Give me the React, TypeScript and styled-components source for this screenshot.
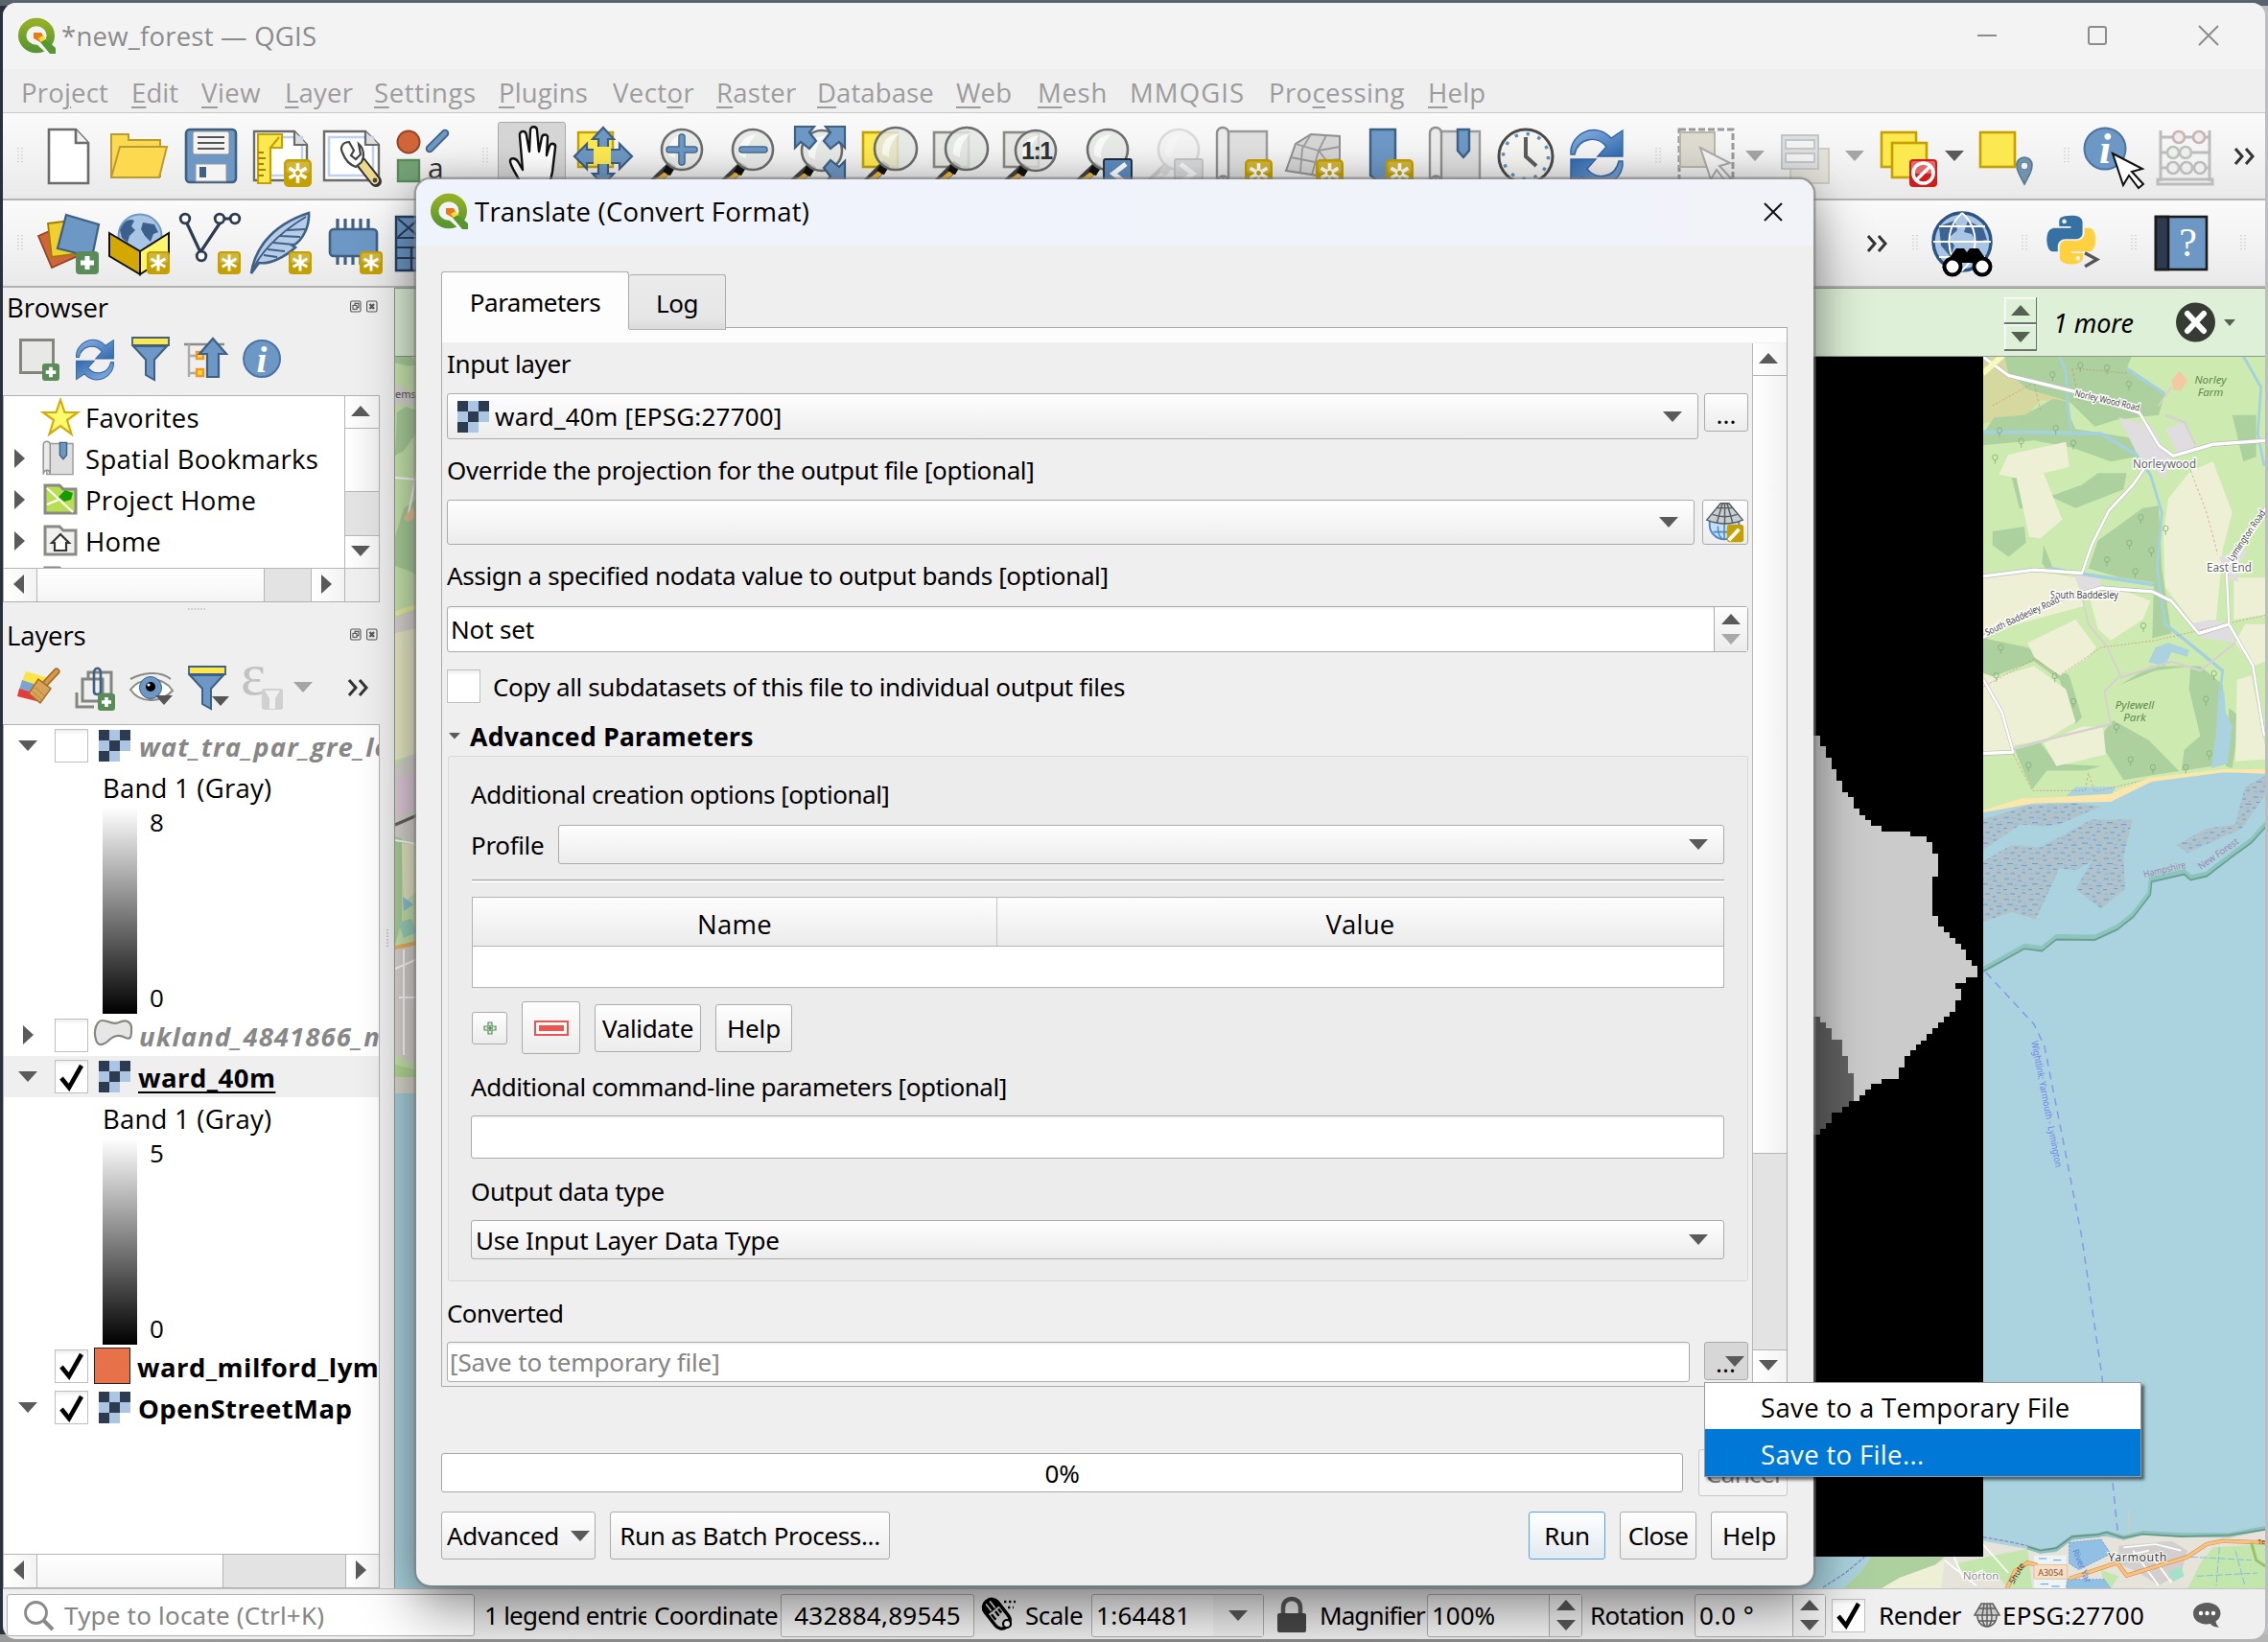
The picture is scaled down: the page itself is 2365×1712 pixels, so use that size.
import React from 'react';
import styled, { createGlobalStyle, css } from 'styled-components';

const SEGOE = `"Open Sans", "Noto Sans", sans-serif`;
const TAHOMA = `"Noto Sans", "Open Sans", sans-serif`;
const BLUE = '#6d97c4';
const NAVY = '#3f5f83';
const GOLD = '#c4a000';
const YELLOW = '#fce94f';

const Global = createGlobalStyle`
  *, *::before, *::after { box-sizing: border-box; }
  html, body { margin: 0; padding: 0; overflow: hidden; }
  svg { display: block; flex: none; overflow: visible; }
`;

/* ---------- shared text styles ---------- */
const segoe = css`
  font-family: ${SEGOE};
  font-size: 27.5px;
  letter-spacing: 0.23px;
  white-space: pre;
`;
const tahoma = css`
  font-family: ${TAHOMA};
  font-size: 26px;
  letter-spacing: -0.35px;
  white-space: pre;
`;
const face = css`
  background: linear-gradient(#fefefe, #ececec);
  border: 1.5px solid #ababab;
  border-radius: 3px;
`;

/* ---------- shell ---------- */
const Desktop = styled.div`
  position: relative;
  width: 2365px;
  height: 1712px;
  padding: 3px 3px 3px;
  overflow: hidden;
  color: #000;
  background:
    linear-gradient(90deg, #9a9a9a, #8a8a8a 60%, #b5b5b5) 0 100% / 100% 8px no-repeat,
    linear-gradient(#59636e, #59636e) 0 0 / 100% 6px no-repeat,
    linear-gradient(90deg, #2a313c 0 12px, transparent 12px),
    #bdbdbf;
`;
const Window = styled.div`
  display: flex;
  flex-direction: column;
  width: 2359px;
  height: 1706px;
  border-radius: 14px;
  overflow: hidden;
  background: #efefef;
`;
const TitleBar = styled.header`
  display: flex;
  align-items: center;
  height: 69px;
  flex: none;
  padding-left: 16px;
  background: #f3f3f3;
  color: #8b8b8b;
  ${segoe}
`;
const TitleText = styled.span`
  flex: 1;
  margin-left: 5px;
  line-height: 40px;
  padding-top: 1px;
`;
const Caption = styled.div`
  display: flex;
  align-items: center;
  justify-content: center;
  width: 115px;
  height: 69px;
  padding-bottom: 2px;
  &:last-child { width: 118px; }
`;
const MenuBar = styled.nav`
  display: flex;
  align-items: center;
  height: 46px;
  flex: none;
  padding: 4px 0 0 19px;
  border-bottom: 1.5px solid #c9c9c9;
  color: #9c9c9c;
  ${segoe}
`;
const MenuItem = styled.span<{ $w: number; $ls?: number }>`
  width: ${(p) => p.$w}px;
  letter-spacing: ${(p) => p.$ls ?? 0.3}px;
  u { text-decoration-thickness: 2px; text-underline-offset: 4px; }
`;
const ToolBar = styled.div`
  display: flex;
  align-items: center;
  height: 91px;
  flex: none;
  border-bottom: 2px solid #b3b3b3;
  background: linear-gradient(#fafafa, #f3f3f3 50%, #e9e9e9);
`;
const Cell = styled.div<{ $w?: number; $on?: boolean; $pl?: number }>`
  display: flex;
  align-items: center;
  justify-content: center;
  flex: none;
  width: ${(p) => p.$w ?? 74}px;
  height: 72px;
  padding-left: ${(p) => p.$pl ?? 0}px;
  ${(p) => p.$on && css`
    background: #d5d5d5;
    border: 1.5px solid #a9a9a9;
    border-radius: 3px;
    height: 76px;
    margin: 4px 2px 0 1px;
    width: 71px;
  `}
`;
const Spring = styled.div` flex: 1; `;
const Body = styled.main`
  display: flex;
  height: 1356px;
  flex: none;
`;

/* ---------- docks ---------- */
const Docks = styled.aside`
  display: flex;
  flex-direction: column;
  width: 393px;
  height: 1356px;
`;
const DockTitle = styled.div`
  display: flex;
  align-items: flex-start;
  height: 44px;
  flex: none;
  padding: 0 3px 0 4px;
  line-height: 41px;
  ${segoe}
  letter-spacing: -0.1px;
  span { flex: 1; }
  svg { margin-top: 13px; }
`;
const DockTools = styled.div<{ $h: number }>`
  display: flex;
  height: ${(p) => p.$h}px;
  flex: none;
  padding: 0 0 8px 9px;
  align-items: center;
`;
const DockCell = styled.div<{ $w?: number }>`
  display: flex;
  justify-content: center;
  align-items: center;
  flex: none;
  width: ${(p) => p.$w ?? 58}px;
`;
const TreeFrame = styled.div<{ $h: number }>`
  display: flex;
  flex-direction: column;
  height: ${(p) => p.$h}px;
  flex: none;
  border: 1.5px solid #b0b0b0;
  background: #fff;
`;
const TreeTop = styled.div`
  display: flex;
  flex: 1;
  min-height: 0;
`;
const TreeList = styled.div<{ $pt?: number }>`
  flex: 1;
  min-width: 0;
  overflow: hidden;
  padding-top: ${(p) => p.$pt ?? 0}px;
`;
const TreeRow = styled.div<{ $h: number; $sel?: boolean }>`
  display: flex;
  align-items: center;
  height: ${(p) => p.$h}px;
  background: ${(p) => (p.$sel ? '#efefef' : 'transparent')};
  ${segoe}
`;
const ArrowSlot = styled.div<{ $w: number }>`
  display: flex;
  justify-content: center;
  flex: none;
  width: ${(p) => p.$w}px;
  padding-right: 3px;
`;
const IconSlot = styled.div<{ $w: number; $ml?: number }>`
  display: flex;
  justify-content: center;
  flex: none;
  width: ${(p) => p.$w}px;
  margin-left: ${(p) => p.$ml ?? 0}px;
`;
const PlainName = styled.span`
  margin-left: 3px;
  padding-top: 2px;
  letter-spacing: 0.3px;
`;
const LayerName = styled.span<{ $off?: boolean; $active?: boolean; $ml?: number }>`
  font-weight: 700;
  margin-left: ${(p) => p.$ml ?? 3}px;
  padding-top: 2px;
  color: ${(p) => (p.$off ? '#878787' : '#000')};
  font-style: ${(p) => (p.$off ? 'italic' : 'normal')};
  letter-spacing: ${(p) => (p.$off ? 1.1 : 0.45)}px;
  text-decoration: ${(p) => (p.$active ? 'underline' : 'none')};
  text-underline-offset: 4px;
  text-decoration-thickness: 2px;
`;
const BandName = styled.div<{ $h: number }>`
  height: ${(p) => p.$h}px;
  line-height: ${(p) => p.$h + 2}px;
  padding-left: 103px;
  ${segoe}
`;
const Legend = styled.div`
  display: flex;
  height: 215px;
  padding-left: 103px;
  gap: 13px;
`;
const Ramp = styled.div`
  width: 36px;
  background: linear-gradient(#fff, #000);
`;
const RampEnds = styled.div`
  display: flex;
  flex-direction: column;
  justify-content: space-between;
  padding: 0 0 2px;
  line-height: 30px;
  ${segoe}
  font-size: 26px;
`;
const CheckBox = styled.div`
  display: flex;
  align-items: center;
  justify-content: center;
  width: 35px;
  height: 35px;
  flex: none;
  border: 1.5px solid #bfbfbf;
  background: linear-gradient(#ededed, #fff 5px);
`;
const Swatch = styled.div`
  width: 38px;
  height: 38px;
  margin-left: 6px;
  flex: none;
  background: #e77148;
  border: 1.5px solid #232323;
`;

/* ---------- scroll bars ---------- */
const HBar = styled.div`
  display: flex;
  height: 35px;
  flex: none;
  border-top: 1.5px solid #b5b5b5;
  background: #e3e3e3;
`;
const VBar = styled.div<{ $w?: number }>`
  display: flex;
  flex-direction: column;
  width: ${(p) => p.$w ?? 36}px;
  flex: none;
  border-left: 1.5px solid #b5b5b5;
  background: #e3e3e3;
`;
const BarButton = styled.div<{ $edge: 'left' | 'right' | 'top' | 'bottom' }>`
  display: flex;
  align-items: center;
  justify-content: center;
  width: 35px;
  height: 34px;
  flex: none;
  padding: 0 3px 2px 0;
  background: linear-gradient(90deg, #fff, #f3f3f3);
  border-${(p) => p.$edge}: 1.5px solid #b5b5b5;
`;
const Thumb = styled.div<{ $size: number; $v?: boolean }>`
  flex: none;
  ${(p) => (p.$v
    ? css`height: ${p.$size}px; background: linear-gradient(90deg, #fff, #f1f1f1); border-bottom: 1.5px solid #b5b5b5;`
    : css`width: ${p.$size}px; background: linear-gradient(#fff, #f5f5f5); border-right: 1.5px solid #b5b5b5;`)}
`;
const Corner = styled.div`
  width: 36px;
  background: #efefef;
  border-left: 1.5px solid #b5b5b5;
`;
const Sash = styled.div<{ $v?: boolean }>`
  display: flex;
  align-items: center;
  justify-content: center;
  flex: none;
  ${(p) => (p.$v ? 'width: 15px; height: 1356px;' : 'height: 14px; padding-left: 10px;')}
`;

/* ---------- map side ---------- */
const MapSide = styled.section`
  display: flex;
  flex-direction: column;
  width: 1951px;
  border-left: 1px solid #8f9c8c;
  overflow: hidden;
`;
const MessageBar = styled.div`
  display: flex;
  align-items: center;
  justify-content: flex-end;
  height: 72px;
  flex: none;
  padding: 0 31px 1px 0;
  background: #def0d8;
  border: solid #8e9b8a;
  border-width: 1.5px 0;
`;
const MessageStep = styled.div`
  display: grid;
  grid-template-rows: 28px 28px;
  width: 34px;
  margin-top: 5px;
`;
const StepKey = styled.div`
  display: flex;
  align-items: center;
  justify-content: center;
  border: solid #6c7569;
  border-width: 0 1.5px 2px 0;
  box-shadow: inset 1.5px 1.5px 0 #fff;
`;
const More = styled.em`
  ${tahoma}
  font-size: 27px;
  width: 86px;
  margin: 2px 42px 0 17px;
  letter-spacing: -0.1px;
`;

/* ---------- status bar ---------- */
const StatusBar = styled.footer`
  display: flex;
  align-items: center;
  height: 53px;
  flex: none;
  padding-top: 2px;
  border-top: 1.5px solid #c2c2c2;
  ${tahoma}
`;
const Locator = styled.div`
  display: flex;
  align-items: center;
  gap: 11px;
  width: 488px;
  height: 44px;
  flex: none;
  margin-left: 4px;
  padding-left: 17px;
  border: 1.5px solid #b0b0b0;
  border-radius: 3px;
  background: #fff;
  color: #858585;
  letter-spacing: 0.2px;
`;
const StatusText = styled.span<{ $w: number; $ml?: number; $ls?: number }>`
  width: ${(p) => p.$w}px;
  margin-left: ${(p) => p.$ml ?? 0}px;
  letter-spacing: ${(p) => p.$ls ?? -0.35}px;
  flex: none;
  overflow: hidden;
`;
const StatusField = styled.div<{ $w: number; $center?: boolean; $ls?: number }>`
  display: flex;
  align-items: center;
  justify-content: ${(p) => (p.$center ? 'center' : 'space-between')};
  width: ${(p) => p.$w}px;
  height: 45px;
  flex: none;
  padding-left: ${(p) => (p.$center ? 0 : 4)}px;
  border: 1.5px solid #b0b0b0;
  border-radius: 3px;
  background: #f6f6f6;
  letter-spacing: ${(p) => p.$ls ?? 0}px;
`;
const Spinner = styled.div<{ $w: number; $bare?: boolean }>`
  display: flex;
  flex-direction: column;
  align-items: center;
  justify-content: center;
  gap: 10px;
  width: ${(p) => p.$w}px;
  height: 100%;
  border-left: ${(p) => (p.$bare ? 'none' : '1.5px solid #ababab')};
  background: ${(p) => (p.$bare ? '#eeeeee' : 'linear-gradient(#fdfdfd, #ececec)')};
`;
const StatusIcon = styled.div<{ $w: number }>`
  display: flex;
  justify-content: center;
  align-items: center;
  width: ${(p) => p.$w}px;
  flex: none;
`;

/* ---------- dialog ---------- */
const Dialog = styled.div`
  position: absolute;
  left: 434px;
  top: 187px;
  width: 1457px;
  height: 1466px;
  border-radius: 15px;
  background: #efefef;
  box-shadow: 0 0 0 2.5px rgba(125, 125, 125, 0.62), 0 26px 60px 0 rgba(0, 0, 0, 0.42), 0 0 34px rgba(0, 0, 0, 0.16);
`;
const DialogTitle = styled.header`
  display: flex;
  align-items: center;
  gap: 6px;
  height: 69px;
  padding: 0 32px 2px 15px;
  border-radius: 15px 15px 0 0;
  background: linear-gradient(90deg, #eff3fc, #f1f3f9);
  ${segoe}
  span { flex: 1; }
`;
const DialogBody = styled.div`
  display: flex;
  flex-direction: column;
  padding: 28px 27px 0 26px;
`;
const Tabs = styled.div`
  display: flex;
  align-items: flex-start;
  position: relative;
  z-index: 1;
  height: 57px;
`;
const Tab = styled.div<{ $on?: boolean; $w: number }>`
  display: flex;
  align-items: center;
  justify-content: center;
  width: ${(p) => p.$w}px;
  height: ${(p) => (p.$on ? 60 : 58)}px;
  margin-top: ${(p) => (p.$on ? -1 : 2)}px;
  padding-top: ${(p) => (p.$on ? 3 : 1)}px;
  border: 1.5px solid #ababab;
  border-left-width: ${(p) => (p.$on ? '1.5px' : '0')};
  border-bottom: ${(p) => (p.$on ? 'none' : '1.5px solid #b5b5b5')};
  border-radius: 3px 3px 0 0;
  background: ${(p) => (p.$on ? '#fdfdfd' : 'linear-gradient(#ebebeb, #e6e6e6 80%, #dadada)')};
  ${tahoma}
  letter-spacing: -0.5px;
`;
const Pane = styled.div`
  display: flex;
  height: 1105px;
  padding: 16px 0 4px;
  border: 1.5px solid #ababab;
  background: linear-gradient(#fcfcfc 0 15px, #efefef 15px);
`;
const Form = styled.div`
  display: flex;
  flex-direction: column;
  flex: 1;
  min-width: 0;
  padding: 0 4px 0 5px;
`;
const Label = styled.div<{ $h: number; $pb?: number; $pt?: number; $ls?: number }>`
  display: flex;
  align-items: center;
  height: ${(p) => p.$h}px;
  flex: none;
  padding-bottom: ${(p) => p.$pb ?? 0}px;
  padding-top: ${(p) => p.$pt ?? 0}px;
  ${tahoma}
  letter-spacing: ${(p) => p.$ls ?? -0.35}px;
`;
const FieldRow = styled.div<{ $gap?: number; $mt?: number }>`
  display: flex;
  align-items: flex-start;
  gap: ${(p) => p.$gap ?? 0}px;
  margin-top: ${(p) => p.$mt ?? 0}px;
`;
const Combo = styled.div<{ $h: number; $pl?: number; $ls?: number }>`
  display: flex;
  align-items: center;
  gap: 6px;
  flex: 1;
  height: ${(p) => p.$h}px;
  padding: 0 16px 0 ${(p) => p.$pl ?? 5}px;
  ${face}
  ${tahoma}
  letter-spacing: ${(p) => p.$ls ?? -0.2}px;
  span { flex: 1; }
`;
const LineEdit = styled.div<{ $h: number; $hint?: boolean; $pl?: number }>`
  display: flex;
  align-items: center;
  flex: 1;
  height: ${(p) => p.$h}px;
  padding-left: ${(p) => p.$pl ?? 3}px;
  border: 1.5px solid #ababab;
  border-radius: 3px;
  background: linear-gradient(#f0f0f0, #fff 3px);
  color: ${(p) => (p.$hint ? '#858585' : '#000')};
  ${tahoma}
  letter-spacing: -0.15px;
  span { flex: 1; }
`;
const Button = styled.div<{ $w: number; $h: number; $tone?: 'default' | 'pressed' | 'off'; $ls?: number }>`
  display: flex;
  align-items: center;
  justify-content: center;
  gap: 12px;
  width: ${(p) => p.$w}px;
  height: ${(p) => p.$h}px;
  flex: none;
  ${face}
  ${tahoma}
  letter-spacing: ${(p) => p.$ls ?? -0.35}px;
  ${(p) => p.$tone === 'default' && css`border-color: #4da4e6; background: linear-gradient(#fff, #e3e9f0);`}
  ${(p) => p.$tone === 'pressed' && css`background: #d7d7d7; padding-left: 8px;`}
  ${(p) => p.$tone === 'off' && css`border-color: #c8c8c8; color: #7c7c7c; background: #f3f3f3;`}
`;
const DotsLabel = styled.span<{ $overlap?: boolean }>`
  letter-spacing: 0;
  padding-top: 3px;
  margin-right: ${(p) => (p.$overlap ? '-23px' : '0')};
`;
const CheckRow = styled.div`
  display: flex;
  align-items: center;
  gap: 13px;
  height: 35px;
  margin-top: 18px;
  ${tahoma}
`;
const GroupHead = styled.div`
  display: flex;
  align-items: center;
  gap: 10px;
  height: 56px;
  padding: 14px 0 0 2px;
  ${tahoma}
  font-weight: 700;
  font-size: 26.5px;
  letter-spacing: 0.3px;
`;
const GroupBox = styled.div`
  display: flex;
  flex-direction: column;
  height: 548px;
  flex: none;
  margin-left: 1px;
  padding: 0 24px 0 23px;
  border: 1.5px solid #d8d8d8;
  border-radius: 3px;
  background: #ececec;
`;
const ProfileText = styled.div`
  width: 91px;
  line-height: 42px;
  ${tahoma}
`;
const Rule = styled.div`
  height: 3px;
  margin: 15px 0 0 1px;
  border-top: 1.5px solid #a2a2a2;
  border-bottom: 1.5px solid #fff;
`;
const Options = styled.div`
  margin: 15px 0 0 1px;
  height: 95px;
  flex: none;
  border: 1.5px solid #b3b3b3;
  background: #fff;
`;
const OptionsHead = styled.div`
  display: grid;
  grid-template-columns: 546px 1fr;
  height: 51px;
  border-bottom: 1.5px solid #b3b3b3;
  background: linear-gradient(#fdfdfd, #ebebeb);
`;
const OptionsCol = styled.div`
  display: flex;
  align-items: center;
  justify-content: center;
  padding-top: 4px;
  ${segoe}
  & + & { border-left: 1.5px solid #c5c5c5; }
`;
const OptionKeys = styled.div`
  display: flex;
  align-items: center;
  gap: 15px;
  height: 55px;
  margin: 14px 0 0 1px;
`;
const Footer = styled.div`
  display: flex;
  gap: 15px;
  margin-top: 16px;
`;
const Progress = styled.div`
  display: flex;
  align-items: center;
  justify-content: center;
  width: 1295px;
  height: 41px;
  margin-top: 4px;
  border: 1.5px solid #a6a6a6;
  border-radius: 3px;
  background: #fff;
  ${tahoma}
`;
const ProgressRow = styled.div`
  display: flex;
  gap: 16px;
  margin-top: 65px;
`;

/* ---------- popup menu ---------- */
const Popup = styled.div`
  position: absolute;
  left: 1777px;
  top: 1441px;
  width: 456px;
  height: 99px;
  border: 1.5px solid #9a9a9a;
  background: #fff;
  box-shadow: 3px 3px 3px rgba(0, 0, 0, 0.55);
`;
const PopupItem = styled.div<{ $on?: boolean }>`
  display: flex;
  align-items: center;
  height: ${(p) => (p.$on ? 49 : 48)}px;
  padding: 3px 0 0 58px;
  background: ${(p) => (p.$on ? '#0078d7' : 'transparent')};
  color: ${(p) => (p.$on ? '#fff' : '#000')};
  ${segoe}
  letter-spacing: 0.35px;
`;

/* ---------- small drawings ---------- */
type Dir = 'up' | 'down' | 'left' | 'right';
const TRI: Record<Dir, string> = {
  down: 'M0 0H20L10 11Z',
  up: 'M0 11H20L10 0Z',
  right: 'M0 0V20L11 10Z',
  left: 'M11 0V20L0 10Z',
};
function Tri({ d = 'down', c = '#5a5a5a', s = 1 }: { d?: Dir; c?: string; s?: number }) {
  const flat = d === 'up' || d === 'down';
  const w = flat ? 20 : 11;
  const h = flat ? 11 : 20;
  return <svg width={w * s} height={h * s} viewBox={`0 0 ${w} ${h}`}><path d={TRI[d]} fill={c} /></svg>;
}
const Grip = () => (
  <svg width="6" height="17" viewBox="0 0 6 17">
    <path d="M1 0V17M5 0V17" stroke="#c6c6c6" strokeWidth="1.3" strokeDasharray="1.3 2.2" />
  </svg>
);
const Chevrons = () => (
  <svg width="23" height="18" viewBox="0 0 23 18">
    <path d="M2 1L9 9L2 17M13 1L20 9L13 17" fill="none" stroke="#333" strokeWidth="3" />
  </svg>
);
const Tick = () => (
  <svg width="26" height="28" viewBox="0 0 26 28">
    <path d="M2 15L10 25L23 2" fill="none" stroke="#000" strokeWidth="4.6" />
  </svg>
);
const Raster = () => (
  <svg width="33" height="33" viewBox="0 0 3 3" shapeRendering="crispEdges">
    <path d="M0 0H3V2H2V3H0Z" fill="#abc5e3" />
    <path d="M0 0H1V1H0ZM2 0H3V1H2ZM1 1H2V2H1ZM0 2H1V3H0Z" fill="#2c3b4f" />
  </svg>
);
const Logo = () => (
  <svg width="40" height="38" viewBox="0 0 40 38">
    <defs>
      <linearGradient id="qg" x1="0" y1="0" x2="0" y2="1"><stop offset="0" stopColor="#93b023" /><stop offset="1" stopColor="#589632" /></linearGradient>
    </defs>
    <ellipse cx="19" cy="18" rx="14.8" ry="14" fill="none" stroke="url(#qg)" strokeWidth="8.400" />
    <path d="M19 18L39 37H30L19 27Z" fill="#f3f6f0" />
    <path d="M16 15H24L27 20L23 25L16 21Z" fill="#ee7913" />
    <path d="M21 21L26 18L31 24L27 29Z" fill="#f5e03c" />
    <path d="M23 25L29 22L39 31V37H33Z" fill="#589632" />
  </svg>
);
const DockKeys = () => (
  <svg width="28" height="13" viewBox="0 0 28 13" fill="none" stroke="#555" strokeWidth="1.100">
    <rect x=".6" y="1" width="10.400" height="11" rx="1.500" />
    <rect x="3" y="5.400" width="4" height="4" /><path d="M5 5V3.400H9V7.600H7" />
    <rect x="17.600" y="1" width="10.400" height="11" rx="1.500" />
    <path d="M20.500 4L25 9M25 4L20.500 9" strokeWidth="2.200" />
  </svg>
);

/* gold "new item" badge; x,y is its top-left corner */
const Badge = ({ x, y, s }: { x: number; y: number; s: number }) => (
  <g transform={`translate(${x} ${y}) scale(${s / 24})`}>
    <rect width="24" height="24" rx="4" fill={GOLD} />
    <rect x="2" y="2" width="20" height="10" rx="2" fill="#fff" opacity=".22" />
    <path d="M12 3.500V20.500M4.600 7.800L19.400 16.200M19.400 7.800L4.600 16.200" stroke="#fff" strokeWidth="3" />
    {s > 26 && <circle cx="12" cy="12" r="2.800" fill={GOLD} stroke="#fff" strokeWidth="1.600" />}
  </g>
);
const Plus = ({ x, y, s }: { x: number; y: number; s: number }) => (
  <g transform={`translate(${x} ${y}) scale(${s / 24})`}>
    <rect width="24" height="24" rx="4" fill="#5a8c5a" />
    <path d="M12 5V19M5 12H19" stroke="#fff" strokeWidth="5" />
  </g>
);
const Ico = ({ children, s = 64 }: { children: React.ReactNode; s?: number }) => (
  <svg width={s} height={s} viewBox="0 0 64 64">{children}</svg>
);
const Lens = ({ cx = 40, cy = 25, r = 21, dim }: { cx?: number; cy?: number; r?: number; dim?: boolean }) => (
  <g opacity={dim ? 0.4 : 1}>
    <path d={`M${cx - 12} ${cy + 18}L${cx - 34} 64`} stroke="#444" strokeWidth="10" />
    <path d={`M${cx - 16} ${cy + 25}L${cx - 33} 63`} stroke={dim ? '#ccc' : '#f0b93a'} strokeWidth="5" />
    <path d={`M${cx - 10} ${cy + 15}L${cx - 16} ${cy + 25}`} stroke={dim ? '#888' : '#111'} strokeWidth="9" />
    <circle cx={cx} cy={cy} r={r} fill="#e4e6e4" fillOpacity=".82" stroke="#6d6d6d" strokeWidth="2.600" />
    <path d={`M${cx - 14} ${cy + 6}C${cx - 15} ${cy - 8} ${cx - 8} ${cy - 15} ${cx + 4} ${cy - 16}C${cx - 3} ${cy - 9} ${cx - 7} ${cy - 3} ${cx - 7} ${cy + 9}Z`} fill="#fff" opacity=".7" />
  </g>
);
const NewDoc = () => (
  <Ico><path d="M12 4H40L53 18V60H12Z" fill="#fff" stroke="#6b6b6b" strokeWidth="2.600" /><path d="M40 4V18H53" fill="#f1f1f1" stroke="#6b6b6b" strokeWidth="2.600" /></Ico>
);
const OpenFolder = () => (
  <Ico><path d="M3 53V9H21V15H54V53Z" fill="#fcd94f" stroke="#b99b30" strokeWidth="2" /><path d="M3 54L12 22H61L53 54Z" fill="#fcd94f" stroke="#b99b30" strokeWidth="2" /></Ico>
);
const Save = () => (
  <Ico>
    <rect x="7" y="4" width="52" height="55" rx="4" fill={BLUE} stroke={NAVY} strokeWidth="2.600" />
    <rect x="14" y="6" width="38" height="24" rx="2" fill="#f4f4f2" stroke="#888" />
    <path d="M19 12H47M19 18H47M19 24H47" stroke="#555" strokeWidth="2.200" />
    <path d="M17 40H49V58H17Z" fill="#f4f4f2" stroke="#999" /><path d="M21 43H28V54H21Z" fill={NAVY} />
  </Ico>
);
const NewLayout = () => (
  <Ico>
    <path d="M4 6H46L59 20V57H4Z" fill="#fff" stroke="#6b6b6b" strokeWidth="2.400" /><path d="M12 12H54V52H12Z" fill="none" stroke="#bfd0f2" strokeWidth="2.400" />
    <path d="M46 6V20H59" fill="#ddd" stroke="#6b6b6b" strokeWidth="2.200" />
    <path d="M8 9H33V23H21V60H8Z" fill={YELLOW} stroke={GOLD} strokeWidth="2.200" />
    <path d="M8 28H14M8 34H16M8 40H14M8 46H16M8 52H14" stroke="#a38400" strokeWidth="2" /><path d="M21 23L30 12" stroke={GOLD} strokeWidth="2" />
    <Badge x={35} y={35} s={29} />
  </Ico>
);
const Wrench = () => (
  <Ico>
    <path d="M3 6H46L60 20V57H3Z" fill="#fff" stroke="#6b6b6b" strokeWidth="2.400" /><path d="M8 12H54V52H8Z" fill="none" stroke="#bfd0f2" strokeWidth="2.600" />
    <path d="M46 6V20H60" fill="#ddd" stroke="#6b6b6b" strokeWidth="2.200" />
    <path d="M41 38L57 58" stroke="#333" strokeWidth="12" strokeLinecap="round" /><path d="M42 39L56 57" stroke="#ecd98a" strokeWidth="8" strokeLinecap="round" />
    <path d="M22 28C19 22 23 17 29 17L34 26L31 31L36 35L41 30L39 19C45 24 45 33 42 38L36 43C30 41 25 36 22 28Z" fill="#fff" stroke="#444" strokeWidth="2.200" />
    <circle cx="56" cy="57" r="2.400" fill="#444" />
  </Ico>
);
const StyleManager = () => (
  <Ico>
    <ellipse cx="17" cy="17" rx="11.500" ry="11.500" fill="#cf6538" stroke="#934623" strokeWidth="2" />
    <path d="M39 24L55 8" stroke={NAVY} strokeWidth="8.500" strokeLinecap="round" /><path d="M39 24L55 8" stroke={BLUE} strokeWidth="5" strokeLinecap="round" />
    <rect x="6" y="36" width="22" height="22" fill="#76a277" stroke="#5a8c5a" strokeWidth="2.400" />
    <text x="37" y="55" fontFamily={SEGOE} fontSize="30" fill="#333">a</text>
  </Ico>
);
const Hand = () => (
  <Ico><path d="M22 64C18 52 9 42 9 36c0-4 6-4 9 2l4 7L19 10c-1-6 6-7 7-1l3 17 1-22c0-5 7-5 7 0l2 22 3-15c1-4 7-3 6 1l-1 18 3-10c2-4 7-2 6 2l-3 25c-1 6-3 10-3 17z" transform="translate(0 -1)" fill="#fff" stroke="#111" strokeWidth="2.400" strokeLinejoin="round" /></Ico>
);
const PanMap = () => (
  <Ico>
    <rect x="6" y="7" width="36" height="36" fill={YELLOW} stroke={GOLD} strokeWidth="2.400" />
    <path d="M32 2L43 14H37V25H49V19L62 32L49 45V39H37V50H43L32 62L21 50H27V39H15V45L2 32L15 19V25H27V14H21Z" fill={BLUE} stroke={NAVY} strokeWidth="2.200" />
    <rect x="22" y="22" width="18" height="18" fill={YELLOW} />
  </Ico>
);
const ZoomIn = () => <Ico><Lens cx={40} /><path d="M40 12V38M27 25H53" stroke={NAVY} strokeWidth="7.500" strokeLinecap="round" /><path d="M40 12V38M27 25H53" stroke={BLUE} strokeWidth="5" strokeLinecap="round" /></Ico>;
const ZoomOut = () => <Ico><Lens cx={40} /><path d="M29 25H52" stroke={NAVY} strokeWidth="7.500" strokeLinecap="round" /><path d="M29 25H52" stroke={BLUE} strokeWidth="5" strokeLinecap="round" /></Ico>;
const ZoomFull = () => (
  <Ico><Lens cx={34} cy={26} />
    {['', 'translate(64 0) scale(-1 1)', 'translate(64 60) scale(-1 -1)'].map((t) => (
      <path key={t} transform={t} d="M6 1H26L21 7L28 16L21 24L12 17L6 23Z" fill={BLUE} stroke={NAVY} strokeWidth="2.200" />
    ))}
  </Ico>
);
const ZoomSel = ({ c, k }: { c: string; k: string }) => <Ico><rect x="3" y="7" width="36" height="36" fill={c} stroke={k} strokeWidth="2.600" /><Lens cx={37} cy={24} r={22} /></Ico>;
const ZoomNative = () => (
  <Ico><rect x="2" y="7" width="36" height="36" fill="#e6e6e3" stroke="#8b8b85" strokeWidth="2.600" /><Lens cx={35} cy={26} r={21} />
    <text x="20" y="35" fontFamily='"Liberation Sans", sans-serif' fontWeight="700" fontSize="25" letterSpacing="-1.500" fill="#2c3335">1:1</text></Ico>
);
const ZoomHist = ({ next }: { next?: boolean }) => (
  <Ico><g opacity={next ? 0.5 : 1}><Lens cx={36} dim={next} />
    <rect x="32" y="35" width="29" height="29" rx="2" fill={next ? '#c4c7ca' : '#5d8cc0'} stroke={next ? '#999' : '#1f2a36'} strokeWidth="1.800" />
    <path d={next ? 'M38 40L51 50L38 60' : 'M55 40L42 50L55 60'} fill="none" stroke="#fff" strokeWidth="5" /></g></Ico>
);
const Sheet = () => (
  <g><path d="M8 6H54V60H8Z" fill="#dedede" stroke="#9a9a9a" strokeWidth="2.400" /><path d="M14 8V60C14 50 3 50 2 60V8C2 0 14 0 14 8Z" fill="#eaeaea" stroke="#8f8f8f" strokeWidth="2.400" /></g>
);
const NewView = () => <Ico><Sheet /><Badge x={31} y={35} s={29} /></Ico>;
const New3d = () => (
  <Ico><path d="M0 47L10 19L26 9L56 11V54L32 52Z" fill="#d5d5d5" stroke="#8f8f8f" strokeWidth="2" />
    <path d="M5 33L30 38L56 35M10 19L34 26L56 22M26 9L17 24L15 48M42 10L34 26L27 51M34 26L48 44L40 53" fill="none" stroke="#9b9b9b" strokeWidth="1.800" /><Badge x={31} y={35} s={29} /></Ico>
);
const Flag = () => <Ico><path d="M14 4H40V52L27 62L14 52Z" fill={BLUE} stroke={NAVY} strokeWidth="2.400" /><Badge x={30} y={35} s={29} /></Ico>;
const Bookmarks = ({ s }: { s?: number }) => <Ico s={s}><Sheet /><path d="M31 4H43V26L37 33L31 26Z" fill={BLUE} stroke={NAVY} strokeWidth="2.400" /></Ico>;
const Clock = () => (
  <Ico><circle cx="32" cy="32" r="28" fill="#f4f4f0" stroke="#4a4a4a" strokeWidth="3" />
    <circle cx="32" cy="32" r="23.500" fill="none" stroke="#5d8cc0" strokeWidth="3.400" strokeDasharray="3.400 8.900" /><path d="M32 12V32L43 42" fill="none" stroke="#5c5c5c" strokeWidth="4" /></Ico>
);
const Refresh = ({ s }: { s?: number }) => (
  <Ico s={s}>
    <defs><linearGradient id="rf" x1="0" y1="0" x2="1" y2="1"><stop offset="0" stopColor="#8db4e2" /><stop offset="1" stopColor="#2f69ae" /></linearGradient></defs>
    <path d="M5 30C3 10 30 -6 47 13L59 5V32H33L42 22C33 10 13 12 9 30Z" fill="url(#rf)" stroke="#3465a4" strokeWidth="1.400" />
    <path d="M5 30C3 10 30 -6 47 13L59 5V32H33L42 22C33 10 13 12 9 30Z" transform="rotate(180 32 33.500)" fill="url(#rf)" stroke="#3465a4" strokeWidth="1.400" />
  </Ico>
);
const Cursor = ({ t, c = '#111', f = '#fff' }: { t: string; c?: string; f?: string }) => (
  <path transform={t} d="M0 0L31 16L20 19L32 32L27 36L17 23L11 33Z" fill={f} stroke={c} strokeWidth="2" />
);
const SelectTool = () => (
  <Ico><rect x="4" y="4" width="56" height="56" fill="none" stroke="#9a9a9a" strokeWidth="3" strokeDasharray="7 3" /><rect x="5" y="7" width="36" height="36" fill="#dddad0" stroke="#bbb7a8" strokeWidth="2" />
    <Cursor t="translate(26 23)" c="#aaa" f="#f4f4f4" /></Ico>
);
const FormSel = () => (
  <Ico><rect x="17" y="24" width="40" height="36" fill="#e2e0d9" stroke="#cfccc2" strokeWidth="2" /><rect x="8" y="10" width="38" height="35" fill="#dcdee0" stroke="#c3c5c7" strokeWidth="2" />
    <rect x="12" y="15" width="30" height="9" fill="#f2f2f2" stroke="#c3c5c7" strokeWidth="2" /><rect x="12" y="29" width="30" height="9" fill="#f2f2f2" stroke="#c3c5c7" strokeWidth="2" /></Ico>
);
const Deselect = () => (
  <Ico><rect x="6" y="7" width="36" height="36" fill="#fce94f" stroke={GOLD} strokeWidth="2.600" /><rect x="17" y="18" width="36" height="36" fill="#fce94f" stroke={GOLD} strokeWidth="2.600" />
    <rect x="35" y="35" width="29" height="29" rx="4" fill="#d41a1a" /><rect x="37" y="37" width="25" height="13" rx="2" fill="#fff" opacity=".35" /><circle cx="49.500" cy="49.500" r="10.500" fill="none" stroke="#fff" strokeWidth="3.600" /><path d="M43 56L56 43" stroke="#fff" strokeWidth="3.600" /></Ico>
);
const SelectLoc = () => (
  <Ico><rect x="4" y="7" width="36" height="36" fill="#fce94f" stroke={GOLD} strokeWidth="2.600" /><path d="M50 61C44 50 42 46 42 41A8 8 0 0 1 58 41C58 46 56 50 50 61Z" fill="#7193ab" stroke="#56758c" strokeWidth="1.600" /><circle cx="50" cy="42" r="4" fill="#eef" stroke="#56758c" /></Ico>
);
const InfoDisc = ({ cx, cy, r }: { cx: number; cy: number; r: number }) => (
  <g><circle cx={cx} cy={cy} r={r} fill={BLUE} stroke="#4a72a3" strokeWidth="2" />
    <text x={cx} y={cy + r * 0.72} textAnchor="middle" fontFamily='"Liberation Serif", serif' fontStyle="italic" fontWeight="700" fontSize={r * 2.05} fill="#fff">i</text></g>
);
const Identify = () => <Ico><InfoDisc cx={22} cy={24} r={21.500} /><Cursor t="translate(30 29)" /></Ico>;
const Abacus = () => (
  <Ico><g fill="none" stroke="#bcbcbc" strokeWidth="3"><path d="M6 5V58M57 5V58M3 56H60V61H3ZM6 12H57M6 28H57M6 44H57" />
    <g fill="#eee" strokeWidth="2.600"><circle cx="25" cy="12" r="6" stroke="#c9b3b3" /><circle cx="46" cy="12" r="6" stroke="#c9b3b3" /><circle cx="19" cy="28" r="6" stroke="#b9c4b9" /><circle cx="32" cy="28" r="6" stroke="#b9c4b9" /><circle cx="19" cy="44" r="6" /><circle cx="33" cy="44" r="6" /><circle cx="47" cy="44" r="6" /></g></g></Ico>
);
const DataSource = () => (
  <Ico><path d="M1 24L24 14L44 44L15 57Z" fill="#cf6538" stroke="#934623" strokeWidth="1.800" /><path d="M11 11L42 7L45 42L15 46Z" fill="#f0cf2e" stroke="#9b7f00" strokeWidth="1.800" />
    <path d="M30 2L64 12L57 46L21 37Z" fill={BLUE} stroke={NAVY} strokeWidth="2.200" /><Plus x={40} y={40} s={24} /></Ico>
);
const LAND = 'M12 18C16 8 22 5 27 8L24 14L28 18L22 24L20 31L14 26ZM36 10L48 12L52 20L47 22L44 30L38 24L34 17Z';
const GeoPackage = () => (
  <Ico><circle cx="33" cy="24" r="22.500" fill="#a9c5e5" stroke={BLUE} strokeWidth="2" /><path d={LAND} fill="#3c5f8c" />
    <path d="M1 21L33 40V64L1 45Z" fill="#d3a800" stroke="#111" strokeWidth="2" /><path d="M33 40L63 21V45L33 64Z" fill="#fdf66c" stroke="#111" strokeWidth="2" /><Badge x={40} y={40} s={24} /></Ico>
);
const NewShape = () => (
  <Ico><path d="M8 11L22 41L42 11M47 6H53" fill="none" stroke="#2c3b4f" strokeWidth="3.200" /><g fill="#fff" stroke="#2c3b4f" strokeWidth="2.800"><circle cx="6" cy="6" r="4.800" /><circle cx="42" cy="6" r="4.800" /><circle cx="58" cy="6" r="4.800" /><circle cx="23" cy="45" r="4.800" /></g><Badge x={40} y={40} s={24} /></Ico>
);
const Feather = () => (
  <Ico><path d="M1 63C4 42 18 14 61 0C62 14 54 30 44 34L47 36C36 46 20 54 9 52Z" fill="#b5cdea" stroke={NAVY} strokeWidth="2.600" />
    <path d="M1 63C8 44 28 22 58 4M18 38L36 40M24 31L45 33M31 24L52 25M38 18L57 17M14 44L28 46" stroke={NAVY} strokeWidth="2" fill="none" /><Badge x={40} y={40} s={24} /></Ico>
);
const Chip = () => (
  <Ico><path d="M17 6V54M25 6V54M33 6V54M41 6V54M49 6V54" stroke={NAVY} strokeWidth="3.200" /><rect x="9" y="17" width="49" height="28" rx="4" fill={BLUE} stroke={NAVY} strokeWidth="2.600" /><Badge x={40} y={40} s={24} /></Ico>
);
const NewMesh = () => (
  <Ico><path d="M4 4H60V60H4Z" fill={BLUE} stroke="#27415f" strokeWidth="2.400" /><path d="M4 26H60M4 36H60M4 47H60M20 36V60M40 36V60M6 6L28 25L50 6M6 25L28 6" stroke="#27415f" strokeWidth="2.200" fill="none" /></Ico>
);
const MetaSearch = () => (
  <Ico><circle cx="32" cy="30" r="30" fill="#a9c5e5" stroke="#2d5583" strokeWidth="3.400" />
    <path d="M8 14L24 8L27 18L18 26L24 34L20 46L10 34ZM38 8L54 16L58 28L46 30L42 22L34 20Z" fill="#3c6596" /><path d="M2 30H62M8 14H56M8 46H56M32 0C14 16 14 44 32 60C50 44 50 16 32 0" fill="none" stroke="#fff" strokeWidth="2" />
    <path d="M26 37H34L37 41L40 37H49L63 57L54 62L42 52H32L24 62L11 57Z" fill="#000" /><circle cx="22" cy="56" r="8.500" fill="#fff" stroke="#000" strokeWidth="4" /><circle cx="53" cy="56" r="8.500" fill="#fff" stroke="#000" strokeWidth="4" /></Ico>
);
const Python = () => (
  <svg width="58" height="64" viewBox="-20 20 510 540">
    <path fill="#3571a3" d="M167.800 248.100h106.800c29.700 0 53.400-24.500 53.400-54.300V91.900c0-29-24.400-50.700-53.400-55.600-35.800-5.900-74.700-5.600-106.800.1-45.200 8-53.400 24.700-53.400 55.600v40.700h106.900v13.600h-147c-31.100 0-58.300 18.700-66.800 54.200-9.800 40.700-10.200 66.100 0 108.600 7.600 31.600 25.700 54.200 56.800 54.200H101v-48.800c0-35.300 30.500-66.400 66.800-66.400zm-6.700-142.600c-11.100 0-20.100-9.100-20.100-20.300.1-11.300 9-20.400 20.100-20.400 11 0 20.100 9.200 20.100 20.400s-9 20.300-20.100 20.300z" />
    <path fill="#ffd140" d="M439.800 200.500c-7.700-30.900-22.300-54.200-53.400-54.200h-40.100v47.400c0 36.800-31.200 67.800-66.800 67.800H172.700c-29.200 0-53.400 25-53.400 54.300v101.800c0 29 25.200 46 53.400 54.300 33.800 9.900 66.300 11.700 106.800 0 26.900-7.800 53.400-23.500 53.400-54.300v-40.700H226.200v-13.600h160.200c31.100 0 42.600-21.700 53.400-54.200 11.200-33.500 10.700-65.700 0-108.600zM286.200 404c11.100 0 20.100 9.100 20.100 20.300 0 11.300-9 20.400-20.100 20.400-11 0-20.100-9.200-20.100-20.400.1-11.300 9.100-20.300 20.100-20.300z" />
    <path d="M350 375L460 435L350 500" fill="none" stroke="#555" strokeWidth="30" />
  </svg>
);
const HelpBook = () => (
  <Ico><rect x="6" y="4" width="53" height="55" fill={BLUE} stroke="#1b1b1b" strokeWidth="2.600" /><path d="M6 4H19V59H6Z" fill="#2c3b4f" stroke="#1b1b1b" strokeWidth="2.600" />
    <text x="39.500" y="45" textAnchor="middle" fontFamily='"Liberation Serif", serif' fontSize="42" fill="#fff">?</text></Ico>
);

const AddLayer = () => <svg width="42" height="46" viewBox="0 0 42 46"><rect x="1.500" y="3.500" width="34" height="34" fill="#e8e8e6" stroke="#85857f" strokeWidth="3" /><Plus x={24} y={28} s={18} /></svg>;
const Funnel = ({ arrow }: { arrow?: boolean }) => (
  <svg width="42" height="46" viewBox="0 0 42 46"><path d="M3 10H38L25 24V45L16 40V24Z" fill={BLUE} stroke={NAVY} strokeWidth="2" /><path d="M2 1H40V9H2Z" fill="#fce84a" stroke={NAVY} strokeWidth="1.800" />{arrow && <path d="M26 32H44L35 42Z" fill="#555" />}</svg>
);
const Collapse = () => (
  <svg width="46" height="44" viewBox="0 0 46 44"><path d="M0 7H42" stroke="#8c8c85" strokeWidth="2.600" /><path d="M5 7V41M5 19H14M5 37H14" stroke="#aaa" strokeWidth="2.400" fill="none" />
    <rect x="13" y="15" width="7" height="7" fill="#f5e03c" stroke="#f7931e" strokeWidth="2.400" /><rect x="13" y="33" width="7" height="7" fill="#f5e03c" stroke="#f7931e" strokeWidth="2.400" /><path d="M30 1L44 17H36V41H24V17H16Z" fill={BLUE} stroke={NAVY} strokeWidth="2.200" /></svg>
);
const Info = () => <svg width="42" height="42" viewBox="0 0 42 42"><InfoDisc cx={21} cy={21} r={19} /></svg>;
const Brush = () => (
  <svg width="46" height="38" viewBox="0 0 46 38"><path d="M9 2L30 8L22 18L5 12Z" fill="#fbe34b" /><path d="M5 11L23 17L20 27L2 21Z" fill="#7da3cf" /><path d="M2 20L22 26L24 34L0 28Z" fill="#e73b3b" />
    <path d="M27 17L41 2" stroke="#a36a1f" strokeWidth="7" strokeLinecap="round" /><path d="M27 17L41 2" stroke="#d9994a" strokeWidth="4" strokeLinecap="round" /><path d="M22 10L35 20L24 35L12 25Z" fill="#d6a35a" stroke="#a36a1f" strokeWidth="1.400" /><path d="M16 23L26 32M19 19L29 28" stroke="#b98138" /></svg>
);
const AddGroup = () => (
  <svg width="43" height="46" viewBox="0 0 43 46" fill="none" stroke="#85857f" strokeWidth="3"><path d="M2 28V43H20M8 14H29V37H8ZM14 14V7H38V30H29" /><path d="M20 18V8C20 1 27 1 27 8V27C27 31 20 31 20 27V16" stroke={NAVY} strokeWidth="2.600" /><g stroke="none"><rect x="24" y="29" width="18" height="18" rx="3" fill="#5a8c5a" /><path d="M33 33V43M28 38H38" stroke="#fff" strokeWidth="3.600" /></g></svg>
);
const Eye = () => (
  <svg width="46" height="36" viewBox="0 0 46 36"><path d="M1 20C10 8 34 4 45 21C34 33 12 36 1 20Z" fill="#fff" stroke="#8a8a84" strokeWidth="2" /><path d="M1 9C14 2 32 0 43 9" fill="none" stroke="#8a8a84" strokeWidth="2" /><circle cx="22" cy="18" r="11.500" fill={BLUE} stroke={NAVY} /><circle cx="22" cy="17" r="5" fill="#000" /><circle cx="20" cy="15" r="1.600" fill="#fff" /><path d="M27 26H45L36 36Z" fill="#555" /></svg>
);
const Epsilon = () => (
  <svg width="44" height="46" viewBox="0 0 44 46"><text x="-2" y="30" fontFamily='"Liberation Serif", serif' fontSize="62" fill="#c2c2c2">ε</text><rect x="20" y="24" width="22" height="22" rx="3" fill="#d0d0d0" /><path d="M23 26H39L34 34V45H28V34Z" fill="#f0f0f0" /></svg>
);
const Star = () => <svg width="40" height="40" viewBox="0 0 40 40"><path d="M20 2L24.500 15H38L27 23L31.500 37.500L20 29L8.500 37.500L13 23L2 15H15.500Z" fill="#fffa6e" stroke="#d5ab0a" strokeWidth="2.200" /></svg>;
const ProjectHome = () => <svg width="36" height="33" viewBox="0 0 36 33"><path d="M2 2H17L21 6H34V31H2Z" fill="#b8df51" stroke="#8a8a84" strokeWidth="3" /><path d="M4 5L31 30M4 22L16 17" stroke="#fff" strokeWidth="2.200" /><path d="M23 7L31 10L29 17L22 19L16 14Z" fill="#159c04" /></svg>;
const HomeIcon = () => <svg width="36" height="33" viewBox="0 0 36 33"><path d="M2 2H17L21 6H34V31H2Z" fill="#f0f0ef" stroke="#8a8a84" strokeWidth="3" /><path d="M9 19L18 10L27 19H24V27H12V19Z" fill="#fff" stroke="#333" strokeWidth="2.200" /></svg>;
const Polygon = () => <svg width="41" height="34" viewBox="0 0 41 34"><path d="M2 22C-1 12 3 2 9 2C16 2 18 7 26 4C34 0 40 4 39 12C39 20 38 22 33 20C25 16 20 18 14 24C9 28 4 29 2 22Z" fill="#e6e6e6" stroke="#87877f" strokeWidth="2.200" /></svg>;
const Crs = () => (
  <svg width="40" height="50" viewBox="0 0 40 52"><circle cx="19" cy="28" r="16" fill="#c3e0f6" stroke="#4f86c6" strokeWidth="2" /><path d="M7 36H31M19 28V44M12 30Q12 40 17 44M27 30Q27 40 21 44" stroke="#4f86c6" strokeWidth="1.600" fill="none" />
    <path d="M15 5H24L39 23Q20 31 0 23Z" fill="#c9ced3" stroke="#565b60" strokeWidth="1.500" /><path d="M11 10H28M6 17Q20 22 33 17M17 5L11 26M22 5L28 26M19.500 5V28" stroke="#565b60" strokeWidth="1.500" fill="none" />
    <rect x="22" y="28" width="18" height="19" rx="3" fill={GOLD} /><path d="M24 45L35 33" stroke="#fff" strokeWidth="4" /></svg>
);
const Mouse = () => (
  <svg width="40" height="40" viewBox="0 0 40 40"><g transform="rotate(-38 18 20)"><rect x="9" y="1" width="17" height="34" rx="8" fill="#ddd" stroke="#000" strokeWidth="3.400" /><path d="M9 13H26V8Q25 1 17.500 1Q10 1 9 8Z" fill="#000" /><path d="M15 3V12M20 3V12" stroke="#ddd" strokeWidth="1.800" /><path d="M13 15V22M18 15V21M22 15V20" stroke="#000" strokeWidth="2.400" /></g><circle cx="27" cy="29" r="4" fill="#fff" stroke="#000" strokeWidth="2.200" /><path d="M24 6H36M28 12H34" stroke="#111" strokeWidth="2.400" strokeDasharray="2.400 2.600" /></svg>
);
const Lock = () => <svg width="30" height="38" viewBox="0 0 30 38"><path d="M6 20V11C6 -1 24 -1 24 11V20" fill="none" stroke="#5c5c5c" strokeWidth="4.500" /><rect x="0" y="17" width="30" height="20" rx="2" fill="#484848" /></svg>;
const Globe = () => (
  <svg width="28" height="26" viewBox="0 0 28 26" fill="none" stroke="#5d5d5d" strokeWidth="1.500"><ellipse cx="14" cy="14" rx="10" ry="11" fill="#ddd" /><path d="M8 1H20L27 13H1Z" fill="#c8c8c8" /><path d="M5 6H23M11 1L9 14Q9 22 13 25M17 1L19 14Q19 22 15 25M14 1V25M5 19H23" /></svg>
);
const Chat = () => <svg width="29" height="28" viewBox="0 0 29 28"><path d="M14.500 1C23 1 28.500 6 28.500 12C28.500 16 26 19 23.500 20.500C24 23 25 25 27 26.500C22 26.500 19.500 25 18 23C8 25 0 20 0 12C0 6 6 1 14.500 1Z" fill="#5c5c5c" /><circle cx="8" cy="12" r="2.200" fill="#fff" /><circle cx="14.500" cy="12" r="2.200" fill="#fff" /><circle cx="21" cy="12" r="2.200" fill="#fff" /></svg>;
const LoupeIcon = () => <svg width="31" height="31" viewBox="0 0 31 31" fill="none" stroke="#8a8a8a"><circle cx="12.500" cy="12.500" r="11" strokeWidth="2.800" /><path d="M20 20L30 30" strokeWidth="4" /></svg>;

/* ---------- map canvas ---------- */
const WARD = 'M0 840H51V863H69V887H87V912H102V937H120V961H138V972H156V997H174V1010H192V1021H210V1034H243V1046H333V1056H384V1069H402V1093H420V1142H402V1228H420V1250H438V1262H456V1275H474V1287H492V1300H507V1322H525V1335H543V1360H507V1372H474V1384H492V1409H474V1433H456V1445H438V1457H420V1470H402V1482H384V1495H366V1504H351V1516H333V1529H315V1553H297V1578H242V1589H210V1602H192V1614H174V1626H142V1638H120V1650H88V1674H70V1685H52V1698H0Z';
const WARD_DARK = 'M0 1444H51V1457H69V1469H87V1494H120V1529H138V1566H156V1626H142V1638H120V1650H88V1674H70V1685H52V1698H0Z';
const TREES = [[612, 185], [680, 208], [598, 243], [788, 180], [843, 212], [778, 65], [865, 45], [948, 50], [1017, 85], [1054, 372], [1018, 427], [1087, 443], [948, 463], [1037, 488], [1132, 396], [616, 652], [602, 712], [785, 713], [843, 768], [978, 823], [1022, 893], [1092, 910], [1195, 910], [1258, 763], [1283, 708], [703, 905], [1268, 880], [1062, 605]];
function MapCanvas() {
  return (
    <svg width="1950" height="1284" viewBox="411 372 1950 1284">
      <defs>
        <pattern id="marsh" width="78" height="44" patternUnits="userSpaceOnUse">
          <rect width="78" height="44" fill="#b1c3c9" />
          <path d="M2 4H18M46 8H58M12 15H30M56 19H74M0 27H12M34 25H46M22 36H36M58 34H70M44 42H54" stroke="#4a9ff0" strokeWidth="2.200" />
          <path d="M26 5H40M64 13H72M34 18H44M4 37H16M60 27H68" stroke="#86b6dd" strokeWidth="2.200" />
        </pattern>
        <clipPath id="right"><path d="M2067 372H2361V1656H2067Z" /></clipPath>
      </defs>
      <rect x="411" y="372" width="1950" height="1284" fill="#aad3df" />
      <g clipPath="url(#right)">
        <g transform="translate(1880 360) scale(.33333 .48469)">
          <path d="M561 0H1460V915L1300 920L1080 940L960 975L720 985L561 1005Z" fill="#cdebb0" />
          <path d="M561 0H840V125L740 118L700 150L561 168Z" fill="#d6d99f" />
          <path d="M620 0H1040L1010 50L1130 105L1110 150L980 160L910 175L830 120L700 95L640 60Z" fill="#add19e" />
          <path d="M595 155L690 150L780 115L820 120L830 150L850 180L1030 200L1040 240L960 250L840 220L720 205L561 215V190ZM1340 150H1415V240L1375 250ZM650 285H670L690 350L675 352ZM770 325L870 300L920 275H1010L1000 310L850 350ZM590 400L690 390L695 425L640 455L590 430ZM960 400L1060 350L1110 345L1120 480L1150 620L1090 630L1095 510L990 500L890 480L920 420ZM750 430L780 480L770 490L745 470ZM561 630L700 650L830 710L870 800L850 815L800 720L720 680L561 720ZM1085 690L1240 690L1310 730L1330 900L1090 925L1000 935L940 870V830L1000 780L990 730ZM1330 780L1365 800L1340 910L1320 905ZM660 870L740 855L790 900L930 905L880 915L760 915L715 955L690 920Z" fill="#add19e" />
          <path d="M990 730L1100 700L1210 690L1205 740L1240 840L1190 870L1180 920L1080 850L950 800Z" fill="#cdebb0" />
          <path d="M640 235L820 208L830 262L750 275L808 375L740 415L705 412L665 285L610 278ZM1140 330L1210 270L1280 250L1340 360L1310 440L1290 590L1220 600L1130 520L1125 410ZM561 500L720 485L850 500L880 560L720 590L561 620ZM895 545L990 525L1085 550L1060 590L960 635L920 610ZM700 640L850 590L915 650L890 670L800 712L720 670ZM561 705L600 715L720 690L820 740L850 810L750 850L660 860L650 875L561 875ZM750 855L870 820H935L945 880L790 905ZM1345 500L1445 500V580L1345 590ZM1350 640L1380 600L1445 600V680L1405 690ZM1355 720L1400 710L1445 870V890L1350 895Z" fill="#eef0d5" />
          <path d="M985 155L1090 175L1120 215L1150 240L1130 290L1040 230ZM1130 180L1190 165L1225 215L1170 235ZM845 495H930L925 530L870 535ZM1300 455L1390 440L1350 480L1360 510L1320 500ZM1200 600L1270 590L1330 600L1350 640L1250 630Z" fill="#dfdddf" />
          <path d="M1078 682L1100 650L1140 640L1205 655L1200 670L1150 660L1130 690ZM1297 740L1315 745L1320 790L1340 820L1325 900L1275 910L1290 830ZM820 970L850 950L975 950L965 965Z" fill="#aad3df" />
          <g fill="none" stroke="#a5d0de" strokeWidth="8"><path d="M561 187H720L930 190L1040 235L1085 280L1120 360L1105 480L1130 600L1230 655L1310 700L1300 760M800 25L820 60L825 120L835 180M1010 50L1130 105M1372 20L1430 90L1420 190L1440 260M770 480L900 495L1095 515" /></g>
          <g fill="none" stroke="#7fae78" strokeWidth="2">{TREES.map(([x, y]) => <path key={`${x}-${y}`} d={`M${x} ${y + 12}V${y + 3}M${x - 8} ${y - 2}a8 6 0 1 1 16 0a8 6 0 1 1 -16 0`} />)}</g>
          <g fill="none" stroke="#d27b6e" strokeWidth="2" strokeDasharray="6 5" opacity=".7"><path d="M590 130L720 80L740 140M720 80L820 90M840 50L860 120M850 50L1010 60M1210 270L1260 360L1295 450M561 735L720 675L800 710L930 650L1100 635L1445 580M655 880L715 958H880L890 920L910 960L1100 930" /></g>
          <g fill="none" strokeLinejoin="round">
            <path d="M561 25L640 65L850 100L1050 145L1110 215L1155 238L1280 213L1445 205M1070 260L1030 300L955 355L900 430L870 490L720 483L561 497M561 628L780 550L930 522L1090 530L1150 550L1235 620L1330 600L1322 480L1445 350M1330 600L1405 690L1440 840M561 718L620 790L655 875L561 878" stroke="#bbb" strokeWidth="10" />
            <path d="M561 25L640 65L850 100L1050 145L1110 215L1155 238L1280 213L1445 205M1070 260L1030 300L955 355L900 430L870 490L720 483L561 497M561 628L780 550L930 522L1090 530L1150 550L1235 620L1330 600L1322 480L1445 350M1330 600L1405 690L1440 840M561 718L620 790L655 875L561 878" stroke="#fff" strokeWidth="7" />
            <path d="M870 540L890 600L950 650L990 710L940 745L960 815L750 850L655 868M990 715L1150 680L1240 700L1350 640M1130 150L1190 165L1225 215M1110 130L1150 90" stroke="#d6d0d0" strokeWidth="5" />
            <path d="M561 60L625 20" stroke="#f7fabf" strokeWidth="14" />
          </g>
          <path d="M1150 75L1175 55L1200 75L1180 98L1155 95Z" fill="#f3c9a5" />
          <path d="M561 1005L720 985L960 982L1090 938L1310 918L1445 922V912L1310 912L1080 930L960 965L800 972L680 975L561 1000Z" fill="#fbe6ac" />
          <path d="M561 1020L700 990L850 985L930 992L800 1030L750 1035L680 1030L561 1085ZM561 1110L650 1075L740 1080L900 1020H1028L1000 1100L1005 1170L930 1212L850 1170L900 1110L850 1130L800 1125L725 1235L650 1220L561 1240ZM1165 1075L1260 1040L1350 1030L1380 950L1445 925V965L1370 1040L1200 1092Z" fill="url(#marsh)" />
          <path d="M561 1343L690 1293L745 1298L790 1273L910 1274L980 1252L1030 1225L1080 1180L1085 1150L1190 1133L1210 1145L1260 1138L1340 1095L1400 1065L1445 1030" fill="none" stroke="#8cc5bd" strokeWidth="12" />
          <path d="M561 1347L690 1298L745 1303L790 1278L910 1279L980 1257L1030 1230L1084 1182L1088 1154L1190 1138L1210 1150L1260 1142L1340 1100L1400 1070L1445 1036" fill="none" stroke="#6d9f93" strokeWidth="4" />
        </g>
        <path d="M2070 1014L2120 1068L2131 1091L2138 1127L2155 1213L2170 1291L2191 1436L2208 1605" fill="none" stroke="#8698ec" strokeWidth="1.500" strokeDasharray="8 6" />
        <text transform="translate(2117 1086) rotate(79)" fontFamily={TAHOMA} fontSize="10" fill="#6f84ee" textLength="134" lengthAdjust="spacingAndGlyphs">Wightlink: Yarmouth - Lymington</text>
        <g fontFamily={TAHOMA} fill="#666" stroke="#fff" strokeWidth="3" paintOrder="stroke">
          <text x="2223" y="488" fontSize="12.500" textLength="66" lengthAdjust="spacingAndGlyphs">Norleywood</text>
          <text x="2300" y="596" fontSize="12.500" textLength="47" lengthAdjust="spacingAndGlyphs">East End</text>
          <text x="2137" y="624" fontSize="10.500" textLength="71" lengthAdjust="spacingAndGlyphs" fill="#444">South Baddesley</text>
          <text transform="translate(2162 413) rotate(13)" fontSize="10" textLength="69" lengthAdjust="spacingAndGlyphs" fill="#444">Norley Wood Road</text>
          <text transform="translate(2071 663) rotate(-25)" fontSize="10" textLength="84" lengthAdjust="spacingAndGlyphs" fill="#444">South Baddesley Road</text>
          <text transform="translate(2327 586) rotate(-56)" fontSize="10" textLength="62" lengthAdjust="spacingAndGlyphs" fill="#444">Lymington Road</text>
        </g>
        <g fontFamily={TAHOMA} fontStyle="italic" fontSize="11.500" fill="#5d8a4e" textAnchor="middle">
          <text x="2304" y="400">Norley</text><text x="2304" y="413">Farm</text><text x="2225" y="739">Pylewell</text><text x="2225" y="752">Park</text>
        </g>
        <g fontFamily={TAHOMA} fontSize="10" fill="#9f86ac"><text transform="translate(2235 915) rotate(-13)" textLength="45" lengthAdjust="spacingAndGlyphs">Hampshire</text><text transform="translate(2294 907) rotate(-35)" textLength="49" lengthAdjust="spacingAndGlyphs">New Forest</text></g>
      </g>

      <g transform="translate(1880 1560) scale(.33333)">
        <path d="M0 285H60L180 235L205 195L440 188H561V140L700 165L740 180L790 175L830 140L930 125L1000 135L1060 122L1200 128L1330 125L1445 105V290H0Z" fill="#e6e3da" />
        <path d="M0 290V188H210L180 235L120 290Z" fill="#aad3df" />
        <path d="M120 290L180 235L210 190H440L410 215L300 255L240 290Z" fill="#add19e" />
        <path d="M240 290L300 255L410 215L440 200L430 290Z" fill="#eef0d5" />
        <path d="M480 210L620 180L700 165L715 290H640L600 240L500 240ZM930 230L985 250L960 290H940ZM1200 290L1240 210L1280 160L1445 150V290Z" fill="#c3e6ac" />
        <path d="M720 185H820V290H720Z" fill="#eef4f4" /><path d="M735 195H760M780 200H805M740 275H765M775 282H800" stroke="#4a9ff0" strokeWidth="3" />
        <path d="M830 145L930 135L960 180L900 210L860 230L830 210ZM825 260H940L960 290H820Z" fill="#92c0e4" stroke="#7a9fdc" strokeDasharray="7 4" strokeWidth="3" />
        <path d="M985 155L1150 140L1200 170L1180 240L1110 280L1050 240L985 210Z" fill="#d3cfcf" />
        <path d="M1140 235L1180 222L1190 250L1155 268Z" fill="#a5e0c8" />
        <path d="M1210 190L1400 200M1230 250L1420 240M1300 160L1290 280M1350 170L1380 280" stroke="#8ab9e0" strokeWidth="3" strokeDasharray="22 7" />
        <path d="M1000 160L1100 150L1180 170M1030 170L1110 280M1090 190L1150 270M990 190L1080 170M440 200L540 280M470 190L500 260L560 230M560 150L640 240" stroke="#fff" strokeWidth="5" fill="none" />
        <path d="M561 128L640 142L700 155M60 285L130 240L190 190" stroke="#8e8bb4" strokeWidth="4" strokeDasharray="12 5" fill="none" />
        <path d="M700 160L740 172L790 165L840 128L920 122L950 115L1000 130L1060 115L1180 122L1330 122L1445 100" stroke="#86b9ae" strokeWidth="14" fill="none" opacity=".8" />
        <path d="M700 158L740 170L790 162L840 126L920 120L945 112L1000 130L1060 118L1180 126L1330 122L1445 104" stroke="#5d9284" strokeWidth="4" fill="none" />
        <path d="M635 290L660 235L700 208L730 215M830 258L980 208L1010 248L1200 190L1260 150L1310 140L1445 145" stroke="#d4914f" strokeWidth="13" fill="none" />
        <path d="M635 290L660 235L700 208L730 215M830 258L980 208L1010 248L1200 190L1260 150L1310 140L1445 145" stroke="#f9c27f" strokeWidth="9" fill="none" />
        <path d="M1400 145L1415 200L1445 220" stroke="#9dc06a" strokeWidth="9" fill="none" />
        <path d="M1017 45V118" stroke="#dca" strokeWidth="5" strokeDasharray="6 4" />
        <rect x="720" y="214" width="104" height="45" rx="5" fill="#f6dfc4" stroke="#dcae88" strokeWidth="2" />
        <g fontFamily={TAHOMA}>
          <text x="733" y="249" fontSize="29" fill="#7b5233" textLength="78" lengthAdjust="spacingAndGlyphs">A3054</text>
          <text x="498" y="262" fontSize="34" fill="#8c8c8c" stroke="#fff" strokeWidth="6" paintOrder="stroke" textLength="112">Norton</text>
          <text x="952" y="204" fontSize="37" fill="#3c3c3c" stroke="#fff" strokeWidth="6" paintOrder="stroke" textLength="183">Yarmouth</text>
          <text transform="translate(656 276) rotate(-60)" fontSize="26" fill="#333">Shute</text>
          <text transform="translate(840 170) rotate(68)" fontSize="27" fill="#5c7fce">River Yar</text>
          <text x="1420" y="150" fontSize="22" fill="#7b3f10">Te</text>
        </g>
      </g>

      <rect x="1880" y="372" width="187" height="1251" fill="#000" />
      <g transform="translate(1880 360) scale(.33333 .48469)" shapeRendering="crispEdges">
        <path d={WARD} fill="#cbcbcb" /><path d={WARD_DARK} fill="#616161" />
      </g>

      <path d="M411 372H440V1137L425 1139L411 1135Z" fill="#cbe8b0" />
      <path d="M411 372H428L434 380L425 382L411 378ZM413 430L422 424L434 428V450L420 470L411 475ZM420 530L434 520V600L425 595L411 590V560ZM411 870H418V960L411 985Z" fill="#add19e" />
      <path d="M411 400L434 412V422H411ZM411 644L434 636V720L411 705ZM411 800L434 780V880L411 872ZM411 985L434 988V1110L411 1100Z" fill="#dcd7d3" />
      <path d="M411 660L434 655V785L411 793ZM418 880H434V930L420 940Z" fill="#eceecb" />
      <path d="M413 812L434 806V840L413 850Z" fill="#e6cfe0" />
      <path d="M411 640L434 632" stroke="#eef2a5" strokeWidth="5" /><path d="M411 860L434 850" stroke="#666" strokeWidth="3" /><path d="M411 876L434 880M411 1010L434 1000M415 1040H434M420 990V1100M411 498L434 500M424 540L434 490" stroke="#fff" strokeWidth="2" />
      <path d="M419 935L430 943L420 950Z" fill="#94c6de" /><path d="M414 962L428 958L434 972L420 978Z" fill="#9bd6c0" /><path d="M411 988L434 983" stroke="#f0b35f" strokeWidth="4" />
      <path d="M420 540L430 528L432 540L424 544Z" fill="#f0c79b" />
      <path d="M411 1110L434 1116V1124H411Z" fill="#b6dd96" /><path d="M411 1123H434V1140H411Z" fill="#dcd9d0" /><text x="411" y="415" fontFamily={TAHOMA} fontSize="11" fill="#555">ems</text>
    </svg>
  );
}

/* ---------- composition ---------- */
const MENUS: [string, string, string, number, number][] = [
  ['Pro', 'j', 'ect', 115, 0.2], ['', 'E', 'dit', 73, 0.1], ['', 'V', 'iew', 87, 0.5], ['', 'L', 'ayer', 93, 0.2], ['', 'S', 'ettings', 130, 0.6],
  ['', 'P', 'lugins', 119, 0.1], ['Vect', 'o', 'r', 108, 0.4], ['', 'R', 'aster', 105, 0.3], ['', 'D', 'atabase', 145, 0.1], ['', 'W', 'eb', 85, 0.2],
  ['', 'M', 'esh', 96, 0.7], ['MMQGIS', '', '', 145, 1.1], ['Pro', 'c', 'essing', 166, 0.4], ['', 'H', 'elp', 70, 0.2],
];
const ZOOM_TOOLS = [<PanMap />, <ZoomIn />, <ZoomOut />];
const VIEW_TOOLS = [
  <ZoomFull />, <ZoomSel c={YELLOW} k={GOLD} />, <ZoomSel c="#e6e6e3" k="#8b8b85" />, <ZoomNative />,
  <ZoomHist />, <ZoomHist next />, <NewView />, <New3d />, <Flag />, <Bookmarks />,
];

function BrowserDock() {
  const rows: [string, React.ReactNode, boolean][] = [
    ['Favorites', <Star />, false], ['Spatial Bookmarks', <Bookmarks s={38} />, true], ['Project Home', <ProjectHome />, true], ['Home', <HomeIcon />, true], ['', <HomeIcon />, false],
  ];
  return (
    <>
      <DockTitle><span>Browser</span><DockKeys /></DockTitle>
      <DockTools $h={68}>
        {[<AddLayer />, <Refresh s={46} />, <Funnel />, <Collapse />, <Info />].map((icon, i) => <DockCell key={i}>{icon}</DockCell>)}
      </DockTools>
      <TreeFrame $h={216}>
        <TreeTop>
          <TreeList>
            {rows.map(([name, icon, arrow], i) => (
              <TreeRow key={i} $h={43}>
                <ArrowSlot $w={36}>{arrow && <Tri d="right" />}</ArrowSlot>
                <IconSlot $w={46}>{icon}</IconSlot>
                <PlainName>{name}</PlainName>
              </TreeRow>
            ))}
          </TreeList>
          <VBar>
            <BarButton $edge="bottom"><Tri d="up" /></BarButton>
            <Thumb $v $size={66} />
            <Spring />
            <BarButton $edge="top"><Tri /></BarButton>
          </VBar>
        </TreeTop>
        <HBar>
          <BarButton $edge="right"><Tri d="left" /></BarButton>
          <Thumb $size={237} />
          <Spring />
          <BarButton $edge="left"><Tri d="right" /></BarButton>
          <Corner />
        </HBar>
      </TreeFrame>
    </>
  );
}

function LayersDock() {
  const legend = (h: number, top: string) => (
    <>
      <BandName $h={h}>Band 1 (Gray)</BandName>
      <Legend><Ramp /><RampEnds><span>{top}</span><span>0</span></RampEnds></Legend>
    </>
  );
  return (
    <>
      <DockTitle><span>Layers</span><DockKeys /></DockTitle>
      <DockTools $h={69}>
        <DockCell><Brush /></DockCell><DockCell><AddGroup /></DockCell><DockCell $w={60}><Eye /></DockCell><DockCell $w={56}><Funnel arrow /></DockCell>
        <DockCell $w={62}><Epsilon /></DockCell><DockCell $w={20}><Tri c="#a5a5a5" /></DockCell><DockCell $w={95}><Chevrons /></DockCell>
      </DockTools>
      <TreeFrame $h={901}>
        <TreeList>
          <TreeRow $h={43}><ArrowSlot $w={53}><Tri /></ArrowSlot><CheckBox /><IconSlot $w={33} $ml={11}><Raster /></IconSlot><LayerName $off $ml={9}>wat_tra_par_gre_loc</LayerName></TreeRow>
          {legend(43, '8')}
          <TreeRow $h={44}><ArrowSlot $w={53}><Tri d="right" /></ArrowSlot><CheckBox /><IconSlot $w={41} $ml={6}><Polygon /></IconSlot><LayerName $off $ml={6}>ukland_4841866_new</LayerName></TreeRow>
          <TreeRow $h={43} $sel><ArrowSlot $w={53}><Tri /></ArrowSlot><CheckBox><Tick /></CheckBox><IconSlot $w={33} $ml={11}><Raster /></IconSlot><LayerName $active $ml={8}>ward_40m</LayerName></TreeRow>
          {legend(43, '5')}
          <TreeRow $h={44}><ArrowSlot $w={53} /><CheckBox><Tick /></CheckBox><Swatch /><LayerName $ml={7}>ward_milford_lym</LayerName></TreeRow>
          <TreeRow $h={43}><ArrowSlot $w={53}><Tri /></ArrowSlot><CheckBox><Tick /></CheckBox><IconSlot $w={33} $ml={11}><Raster /></IconSlot><LayerName $ml={8}>OpenStreetMap</LayerName></TreeRow>
        </TreeList>
        <HBar>
          <BarButton $edge="right"><Tri d="left" /></BarButton>
          <Thumb $size={194} />
          <Spring />
          <BarButton $edge="left"><Tri d="right" /></BarButton>
        </HBar>
      </TreeFrame>
    </>
  );
}

function TranslateDialog() {
  return (
    <Dialog>
      <DialogTitle>
        <Logo /><span>Translate (Convert Format)</span>
        <svg width="20" height="20" viewBox="0 0 20 20"><path d="M1 1L19 19M19 1L1 19" stroke="#111" strokeWidth="2" /></svg>
      </DialogTitle>
      <DialogBody>
        <Tabs><Tab $on $w={196}>Parameters</Tab><Tab $w={101}>Log</Tab></Tabs>
        <Pane>
          <Form>
            <Label $h={52} $pb={10}>Input layer</Label>
            <FieldRow $gap={6}>
              <Combo $h={48} $pl={10} $ls={0.2}><Raster /><span>ward_40m [EPSG:27700]</span><Tri /></Combo>
              <Button $w={46} $h={40}><DotsLabel>...</DotsLabel></Button>
            </FieldRow>
            <Label $h={63}>Override the projection for the output file [optional]</Label>
            <FieldRow $gap={8}>
              <Combo $h={47}><span /><Tri /></Combo>
              <Button $w={48} $h={47}><Crs /></Button>
            </FieldRow>
            <Label $h={64}>Assign a specified nodata value to output bands [optional]</Label>
            <FieldRow><LineEdit $h={48}><span>Not set</span><Spinner $w={35}><Tri d="up" /><Tri c="#a9a9a9" /></Spinner></LineEdit></FieldRow>
            <CheckRow><CheckBox />Copy all subdatasets of this file to individual output files</CheckRow>
            <GroupHead><Tri s={0.6} />Advanced Parameters</GroupHead>
            <GroupBox>
              <Label $h={71} $pt={6} $ls={-0.48}>Additional creation options [optional]</Label>
              <FieldRow><ProfileText>Profile</ProfileText><Combo $h={41}><span /><Tri /></Combo></FieldRow>
              <Rule />
              <Options><OptionsHead><OptionsCol>Name</OptionsCol><OptionsCol>Value</OptionsCol></OptionsHead></Options>
              <OptionKeys>
                <Button $w={37} $h={34}><svg width="14" height="14" viewBox="0 0 14 14"><path d="M5 1H9V5H13V9H9V13H5V9H1V5H5Z" fill="#dfeadf" stroke="#5a8c5a" strokeWidth="1.200" /><path d="M7 4V10M4 7H10" stroke="#5a8c5a" strokeWidth="1.600" /></svg></Button>
                <Button $w={61} $h={55}><svg width="36" height="16" viewBox="0 0 36 16"><rect x="1" y="1" width="34" height="14" fill="#fff" stroke="#ef5350" strokeWidth="2" /><rect x="5" y="5" width="26" height="6" fill="#ef5350" /></svg></Button>
                <Button $w={111} $h={50}>Validate</Button>
                <Button $w={80} $h={50} $ls={-0.1}>Help</Button>
              </OptionKeys>
              <Label $h={64} $pt={3} $ls={-0.48}>Additional command-line parameters [optional]</Label>
              <FieldRow><LineEdit $h={45} /></FieldRow>
              <Label $h={64} $pt={3} $ls={-0.42}>Output data type</Label>
              <FieldRow><Combo $h={41} $pl={4}><span>Use Input Layer Data Type</span><Tri /></Combo></FieldRow>
            </GroupBox>
            <Label $h={63} $pt={2} $ls={-0.6}>Converted</Label>
            <FieldRow $gap={15}>
              <LineEdit $h={42} $hint $pl={2}>[Save to temporary file]</LineEdit>
              <Button $w={46} $h={40} $tone="pressed"><DotsLabel $overlap>...</DotsLabel><Tri /></Button>
            </FieldRow>
          </Form>
          <VBar>
            <BarButton $edge="bottom"><Tri d="up" /></BarButton>
            <Thumb $v $size={811} />
            <Spring />
            <BarButton $edge="top"><Tri /></BarButton>
          </VBar>
        </Pane>
        <ProgressRow>
          <Progress>0%</Progress>
          <Button $w={93} $h={49} $tone="off" $ls={-0.6}>Cancel</Button>
        </ProgressRow>
        <Footer>
          <Button $w={161} $h={50}>Advanced<Tri /></Button>
          <Button $w={292} $h={50}>Run as Batch Process...</Button>
          <Spring />
          <Button $w={80} $h={50} $tone="default">Run</Button>
          <Button $w={80} $h={50} $ls={-0.7}>Close</Button>
          <Button $w={80} $h={50} $ls={-0.1}>Help</Button>
        </Footer>
      </DialogBody>
    </Dialog>
  );
}

export default function App() {
  return (
    <Desktop>
      <Global />
      <Window>
        <TitleBar>
          <Logo /><TitleText>*new_forest — QGIS</TitleText>
          <Caption><svg width="20" height="20"><path d="M0 10H20" stroke="#8c8c8c" strokeWidth="2" /></svg></Caption>
          <Caption><svg width="20" height="20"><rect x="1" y="1" width="18" height="18" rx="2" fill="none" stroke="#8c8c8c" strokeWidth="2" /></svg></Caption>
          <Caption><svg width="20" height="20"><path d="M0 0L20 20M20 0L0 20" stroke="#8c8c8c" strokeWidth="2" /></svg></Caption>
        </TitleBar>
        <MenuBar>
          {MENUS.map(([a, u, b, w, ls]) => <MenuItem key={a + u + b} $w={w} $ls={ls}>{a}<u>{u}</u>{b}</MenuItem>)}
        </MenuBar>
        <ToolBar>
          <Cell $w={31} $pl={5}><Grip /></Cell>
          {[<NewDoc />, <OpenFolder />, <Save />, <NewLayout />, <Wrench />, <StyleManager />].map((icon, i) => <Cell key={i}>{icon}</Cell>)}
          <Cell $w={40} $pl={16}><Grip /></Cell>
          <Cell $on><Hand /></Cell>
          {ZOOM_TOOLS.map((icon, i) => <Cell key={i}>{icon}</Cell>)}
          {VIEW_TOOLS.map((icon, i) => <Cell key={i} $pl={7}>{icon}</Cell>)}
          <Cell><Clock /></Cell>
          <Cell><Refresh /></Cell>
          <Cell $w={45} $pl={9}><Grip /></Cell>
          <Cell $w={64}><SelectTool /></Cell>
          <Cell $w={38}><Tri c="#a5a5a5" /></Cell>
          <Cell $w={66}><FormSel /></Cell>
          <Cell $w={38}><Tri c="#a5a5a5" /></Cell>
          <Cell $w={70}><Deselect /></Cell>
          <Cell $w={30}><Tri /></Cell>
          <Cell $w={80}><SelectLoc /></Cell>
          <Cell $w={44}><Grip /></Cell>
          <Cell $w={56}><Identify /></Cell>
          <Cell $w={92}><Abacus /></Cell>
          <Cell $w={30}><Chevrons /></Cell>
        </ToolBar>
        <ToolBar>
          <Cell $w={31} $pl={5}><Grip /></Cell>
          {[<DataSource />, <GeoPackage />, <NewShape />, <Feather />, <Chip />, <NewMesh />].map((icon, i) => <Cell key={i}>{icon}</Cell>)}
          <Spring />
          <Cell $w={30}><Chevrons /></Cell>
          <Cell $w={42} $pl={8}><Grip /></Cell>
          <Cell $w={64}><MetaSearch /></Cell>
          <Cell $w={52} $pl={14}><Grip /></Cell>
          <Cell $w={62}><Python /></Cell>
          <Cell $w={50} $pl={16}><Grip /></Cell>
          <Cell $w={64}><HelpBook /></Cell>
          <Cell $w={56} $pl={10}><Grip /></Cell>
        </ToolBar>
        <Body>
          <Docks>
            <BrowserDock />
            <Sash><svg width="18" height="2"><path d="M0 1H18" stroke="#bbb" strokeWidth="1.300" strokeDasharray="1.500 1.800" /></svg></Sash>
            <LayersDock />
          </Docks>
          <Sash $v><svg width="2" height="18"><path d="M1 0V18" stroke="#aaa" strokeWidth="1.300" strokeDasharray="1.500 1.800" /></svg></Sash>
          <MapSide>
            <MessageBar>
              <MessageStep><StepKey><Tri d="up" c="#555f52" /></StepKey><StepKey><Tri c="#555f52" /></StepKey></MessageStep>
              <More>1 more</More>
              <svg width="62" height="42" viewBox="0 0 62 42"><circle cx="20.500" cy="21" r="20.500" fill="#363b33" /><path d="M12 12L29 30M29 12L12 30" stroke="#fff" strokeWidth="6" strokeLinecap="round" /><path d="M50 18H62L56 25Z" fill="#555f52" /></svg>
            </MessageBar>
            <MapCanvas />
          </MapSide>
        </Body>
        <StatusBar>
          <Locator><LoupeIcon />Type to locate (Ctrl+K)</Locator>
          <StatusText $w={169} $ml={10} $ls={-0.75}>1 legend entrie</StatusText>
          <StatusText $w={132} $ml={8} $ls={-0.65}>Coordinate</StatusText>
          <StatusField $w={202} $center $ls={0.25}>432884,89545</StatusField>
          <StatusIcon $w={53}><Mouse /></StatusIcon>
          <StatusText $w={69} $ls={-0.5}>Scale</StatusText>
          <StatusField $w={180} $ls={0.3}>1:64481<Spinner $w={52} $bare><Tri /></Spinner></StatusField>
          <StatusIcon $w={58}><Lock /></StatusIcon>
          <StatusText $w={112} $ls={-0.9}>Magnifier</StatusText>
          <StatusField $w={162}>100%<Spinner $w={34}><Tri d="up" /><Tri /></Spinner></StatusField>
          <StatusText $w={109} $ml={8} $ls={-0.7}>Rotation</StatusText>
          <StatusField $w={137} $ls={0.6}>0.0 °<Spinner $w={34}><Tri d="up" /><Tri /></Spinner></StatusField>
          <StatusText $w={6}> </StatusText>
          <CheckBox><Tick /></CheckBox>
          <StatusText $w={97} $ml={14}>Render</StatusText>
          <StatusIcon $w={32}><Globe /></StatusIcon>
          <StatusText $w={151} $ls={0.35}>EPSG:27700</StatusText>
          <StatusIcon $w={124}><Chat /></StatusIcon>
        </StatusBar>
      </Window>
      <TranslateDialog />
      <Popup>
        <PopupItem>Save to a Temporary File</PopupItem>
        <PopupItem $on>Save to File...</PopupItem>
      </Popup>
    </Desktop>
  );
}
